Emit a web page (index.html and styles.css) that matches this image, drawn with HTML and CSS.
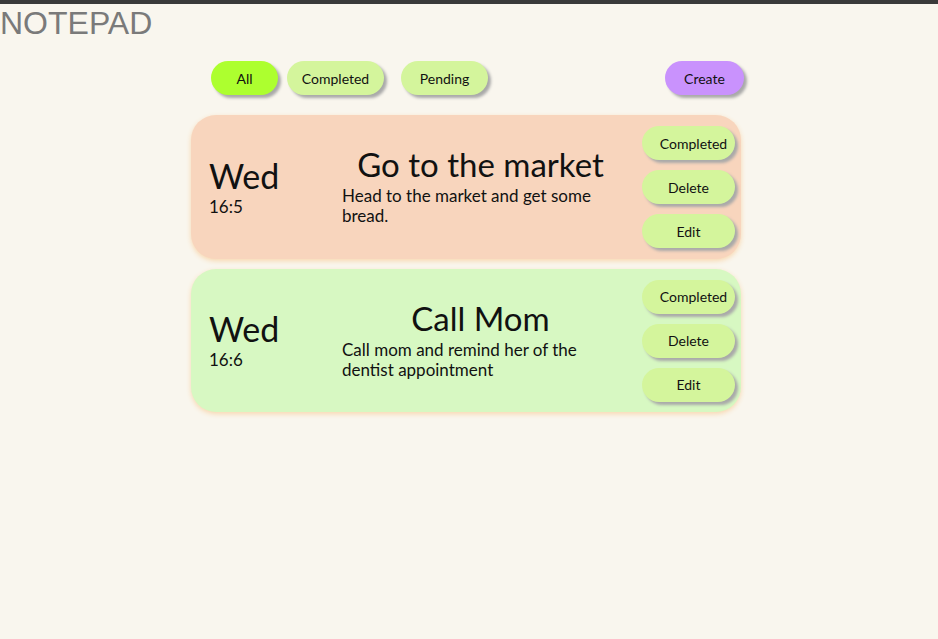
FILE: index.html
```html
<!DOCTYPE html>
<html>
<head>
<meta charset="utf-8">
<link rel="stylesheet" href="styles.css">
</head>
<body>
<div class="topbar"></div>
<h1 class="logo">NOTEPAD</h1>
<main class="wrap">
  <div class="filters">
    <button class="pill pill-active">All</button>
    <button class="pill pill-completed">Completed</button>
    <button class="pill pill-pending">Pending</button>
    <span class="spacer"></span>
    <button class="pill pill-create">Create</button>
  </div>
  <div class="card card-pending">
    <div class="date">
      <div class="day">Wed</div>
      <div class="time">16:5</div>
    </div>
    <div class="body">
      <div class="title">Go to the market</div>
      <div class="desc">Head to the market and get some bread.</div>
    </div>
    <div class="actions">
      <button class="pill act act-completed">Completed</button>
      <button class="pill act">Delete</button>
      <button class="pill act">Edit</button>
    </div>
  </div>
  <div class="card card-done">
    <div class="date">
      <div class="day">Wed</div>
      <div class="time">16:6</div>
    </div>
    <div class="body">
      <div class="title">Call Mom</div>
      <div class="desc">Call mom and remind her of the dentist appointment</div>
    </div>
    <div class="actions">
      <button class="pill act act-completed">Completed</button>
      <button class="pill act">Delete</button>
      <button class="pill act">Edit</button>
    </div>
  </div>
</main>
</body>
</html>
```
FILE: styles.css
```css
html, body {
  margin: 0;
  padding: 0;
  background: #f9f6ee;
}
body {
  font-family: "Lato", "Noto Sans", sans-serif;
  color: #111;
}
.topbar {
  height: 4px;
  background: #3a3a3a;
}
.logo {
  margin: 2px 0 0 0;
  font-family: "Liberation Sans", Arial, sans-serif;
  font-weight: normal;
  font-size: 32px;
  line-height: 34px;
  color: #7a7a7a;
}
.wrap {
  width: 556px;
  margin: 0 auto;
}
.filters {
  display: flex;
  align-items: center;
  gap: 9px;
  padding: 21px 3px 0 20px;
  margin-bottom: 20px;
}
.spacer { flex: 1; }
.pill {
  border: none;
  border-radius: 18px;
  height: 34px;
  font-family: "Lato", "Noto Sans", sans-serif;
  font-size: 14px;
  color: #111;
  background: #d4f59c;
  box-shadow: 3px 3px 3px #a9a9a9;
  padding: 0;
  cursor: pointer;
}
.pill-active {
  background: #adff2f;
  width: 67px;
}
.pill-completed { width: 97px; }
.pill-pending { width: 87px; margin-left: 8px; }
.pill-create {
  background: #c992fd;
  width: 79px;
}
.card {
  width: 550px;
  box-sizing: border-box;
  height: 144px;
  border-radius: 25px;
  display: flex;
  align-items: center;
  padding: 0 6px 0 18px;
  margin-bottom: 10px;
  box-shadow: 0 2px 5px #f8d8b0;
}
.card-pending { background: #f8d5bd; }
.card-done { background: #d7f8c2; height: 143px; }
.date {
  width: 133px;
  padding-top: 0;
}
.day {
  font-size: 34px;
  line-height: 36px;
}
.time {
  font-size: 17px;
  line-height: 20px;
  margin-top: 3px;
}
.body {
  width: 276px;
  margin-top: -2px;
}
.title {
  font-size: 33px;
  line-height: 36px;
  text-align: center;
  padding-left: 1px;
}
.desc {
  font-size: 17px;
  line-height: 20px;
  padding-right: 12px;
  margin-top: 4px;
}
.actions {
  margin-left: auto;
  display: flex;
  flex-direction: column;
  gap: 10px;
}
.act {
  width: 93px;
  font-size: 14px;
}
.act-completed {
  padding-left: 10px;
}
```
